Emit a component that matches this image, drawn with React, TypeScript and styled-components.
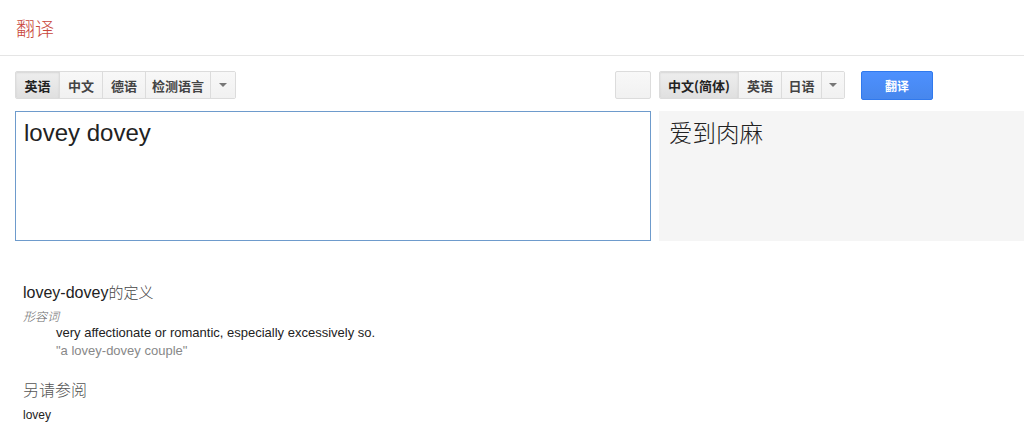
import React from "react";
import styled, { createGlobalStyle } from "styled-components";

const Global = createGlobalStyle`
  html, body { margin: 0; padding: 0; background: #fff; }
  body { font-family: "Liberation Sans", Arial, "Noto Sans CJK SC", sans-serif; color: #222; }
`;

const Header = styled.div`
  height: 56px;
  border-bottom: 1px solid #e5e5e5;
  display: flex;
  align-items: center;
  padding-left: 16px;
  box-sizing: border-box;
`;

const Title = styled.div`
  color: #c9473b;
  font-size: 19px;
  font-weight: 300;
  font-family: "Noto Sans CJK SC", sans-serif;
  margin-top: -1px;
`;

const Main = styled.div`
  padding: 14px 0 0 15px;
`;

const ToolRow = styled.div`
  display: grid;
  grid-template-columns: 600px 1fr;
  height: 30px;
`;

const Side = styled.div`
  display: flex;
  align-items: center;
`;

const Group = styled.div`
  display: flex;
  border: 1px solid #dcdcdc;
  border-radius: 2px;
  height: 28px;
  box-sizing: border-box;
  overflow: hidden;
`;

const LangBtn = styled.div<{ $active?: boolean; $w: number }>`
  width: ${(p) => p.$w}px;
  box-sizing: border-box;
  display: flex;
  align-items: center;
  justify-content: center;
  font-family: "Noto Sans CJK SC", sans-serif;
  font-weight: 700;
  font-size: 13px;
  background: ${(p) => (p.$active ? "linear-gradient(#eeeeee,#e0e0e0)" : "linear-gradient(#f8f8f8,#f1f1f1)")};
  box-shadow: ${(p) => (p.$active ? "inset 0 1px 2px rgba(0,0,0,0.1)" : "none")};
  color: ${(p) => (p.$active ? "#222" : "#444")};
  & + & { border-left: 1px solid #dcdcdc; }
`;

const Caret = styled.div`
  width: 0;
  height: 0;
  border-left: 4px solid transparent;
  border-right: 4px solid transparent;
  border-top: 4px solid #777;
`;

const EmptyBtn = styled.div`
  width: 36px;
  height: 28px;
  box-sizing: border-box;
  border: 1px solid #dcdcdc;
  border-radius: 2px;
  background: linear-gradient(#f8f8f8, #f1f1f1);
  margin-right: 8px;
`;

const Translate = styled.div`
  margin-left: 16px;
  width: 72px;
  height: 29px;
  box-sizing: border-box;
  border: 1px solid #3079ed;
  border-radius: 2px;
  background: linear-gradient(#4d90fe, #4787ed);
  color: #fff;
  font-family: "Noto Sans CJK SC", sans-serif;
  font-weight: 700;
  font-size: 12px;
  display: flex;
  align-items: center;
  justify-content: center;
`;

const Panes = styled.div`
  display: grid;
  grid-template-columns: 636px 1fr;
  gap: 8px;
  margin-top: 11px;
  height: 130px;
`;

const Source = styled.div`
  border: 1px solid #6e9bcc;
  box-sizing: border-box;
  padding: 5px 8px;
  font-size: 24px;
  color: #222;
  line-height: 32px;
`;

const Result = styled.div`
  background: #f5f5f5;
  padding: 5px 10px;
  font-size: 23.5px;
  line-height: 32px;
  font-weight: 300;
  font-family: "Noto Sans CJK SC", sans-serif;
  color: #222;
`;

const Dict = styled.div`
  padding: 41px 0 0 23px;
`;

const DefTitle = styled.div`
  font-size: 16px;
  line-height: 20px;
  color: #222;
  & span { font-family: "Noto Sans CJK SC", sans-serif; font-weight: 300; color: #444; font-size: 15px; }
`;

const Pos = styled.div`
  font-family: "Noto Sans CJK SC", sans-serif;
  font-style: italic;
  font-weight: 300;
  font-size: 12px;
  color: #666;
  margin-top: 5px;
  line-height: 16px;
`;

const Gloss = styled.div<{ $muted?: boolean }>`
  padding-left: 33px;
  font-size: 13px;
  line-height: 18px;
  color: ${(p) => (p.$muted ? "#888" : "#222")};
`;

const SeeAlso = styled.div`
  font-family: "Noto Sans CJK SC", sans-serif;
  font-weight: 300;
  font-size: 16px;
  color: #555;
  margin-top: 18px;
  line-height: 22px;
`;

const Word = styled.div`
  font-size: 12px;
  color: #222;
  margin-top: 8px;
`;

export default function App() {
  return (
    <>
      <Global />
      <Header>
        <Title>翻译</Title>
      </Header>
      <Main>
        <ToolRow>
          <Side>
            <Group>
              <LangBtn $active $w={43}>英语</LangBtn>
              <LangBtn $w={43}>中文</LangBtn>
              <LangBtn $w={43}>德语</LangBtn>
              <LangBtn $w={65}>检测语言</LangBtn>
              <LangBtn $w={25}><Caret /></LangBtn>
            </Group>
          </Side>
          <Side>
            <EmptyBtn />
            <Group>
              <LangBtn $active $w={78}>中文(简体)</LangBtn>
              <LangBtn $w={43}>英语</LangBtn>
              <LangBtn $w={40}>日语</LangBtn>
              <LangBtn $w={23}><Caret /></LangBtn>
            </Group>
            <Translate>翻译</Translate>
          </Side>
        </ToolRow>
        <Panes>
          <Source>lovey dovey</Source>
          <Result>爱到肉麻</Result>
        </Panes>
      </Main>
      <Dict>
        <DefTitle>lovey-dovey<span>的定义</span></DefTitle>
        <Pos>形容词</Pos>
        <Gloss>very affectionate or romantic, especially excessively so.</Gloss>
        <Gloss $muted>"a lovey-dovey couple"</Gloss>
        <SeeAlso>另请参阅</SeeAlso>
        <Word>lovey</Word>
      </Dict>
    </>
  );
}
